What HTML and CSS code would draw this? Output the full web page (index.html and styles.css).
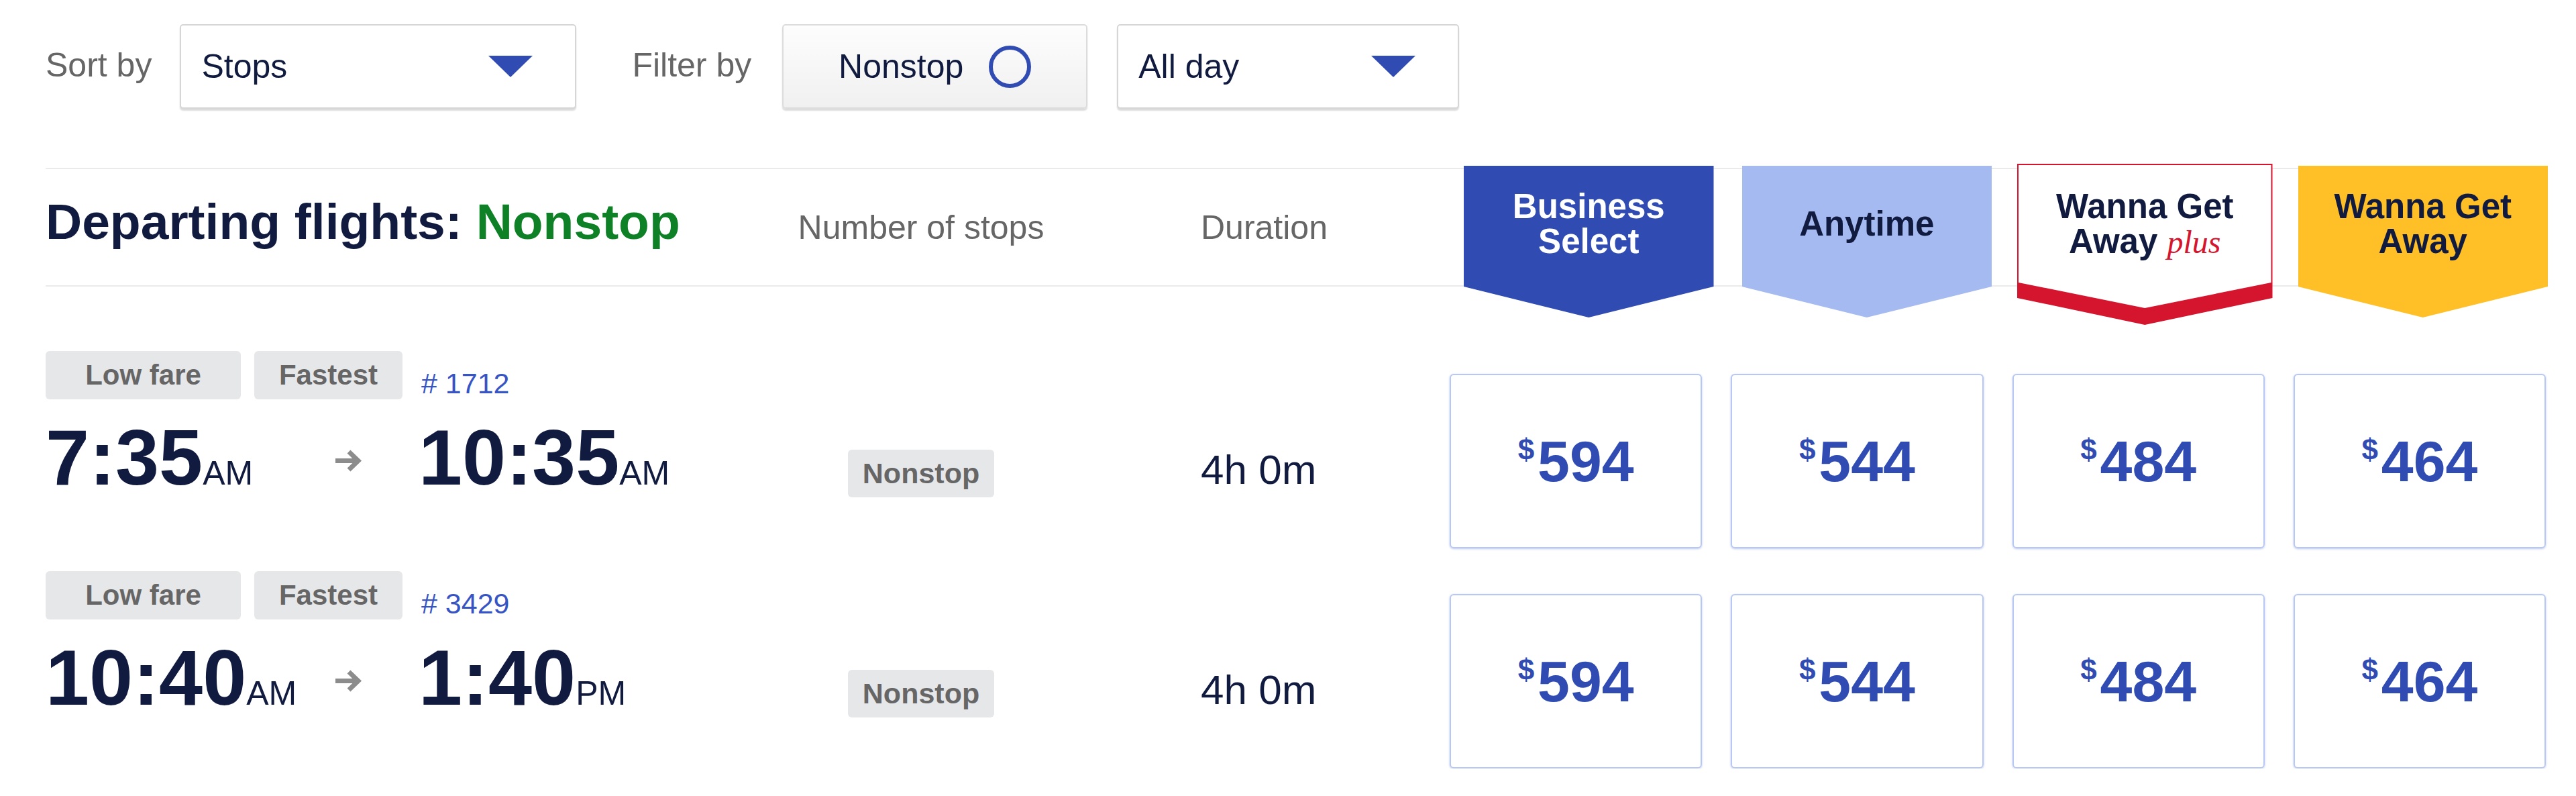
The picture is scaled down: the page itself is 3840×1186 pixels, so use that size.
FILE: index.html
```html
<!DOCTYPE html>
<html lang="en">
<head>
  <meta charset="UTF-8">
  <meta name="viewport" content="width=device-width, initial-scale=1.0">
  <title>Select flights</title>
  <link rel="stylesheet" href="styles.css">
</head>
<body>
  <div class="page">
    <!-- Sort and filter controls -->
    <div class="toolbar">
      <span class="tool-label">Sort by</span>
      <div class="select select-sort">
        <span>Stops</span>
        <svg class="caret" viewBox="0 0 66 32"><path d="M0 0h66L33 32z"/></svg>
      </div>
      <span class="tool-label filter-label">Filter by</span>
      <button class="toggle">Nonstop <span class="ring"></span></button>
      <div class="select select-time">
        <span>All day</span>
        <svg class="caret" viewBox="0 0 66 32"><path d="M0 0h66L33 32z"/></svg>
      </div>
    </div>

    <!-- Column headers -->
    <div class="results-head">
      <h2 class="title">Departing flights: <span class="accent">Nonstop</span></h2>
      <div class="col-label stops-label">Number of stops</div>
      <div class="col-label duration-label">Duration</div>
      <div class="fare-heads">
        <div class="fare-head business"><div class="fare-name"><span>Business<br>Select</span></div></div>
        <div class="fare-head anytime"><div class="fare-name"><span>Anytime</span></div></div>
        <div class="fare-head plus">
          <div class="plus-inner"><div class="fare-name"><span>Wanna Get<br>Away <em>plus</em></span></div></div>
        </div>
        <div class="fare-head getaway"><div class="fare-name"><span>Wanna Get<br>Away</span></div></div>
      </div>
    </div>

    <!-- Flight rows -->
    <div class="flight">
      <div class="flight-main">
        <div class="tags">
          <span class="tag tag-wide">Low fare</span>
          <span class="tag">Fastest</span>
          <span class="flight-no"># 1712</span>
        </div>
        <div class="times">
          <div class="time depart">7:35<small>AM</small></div>
          <svg class="arrow" viewBox="0 0 45 43"><path d="M3 21.5h34M23 8l14 13.5L23 35" /></svg>
          <div class="time">10:35<small>AM</small></div>
        </div>
      </div>
      <div class="stops"><span class="stop-tag">Nonstop</span></div>
      <div class="duration">4h 0m</div>
      <div class="fares">
        <div class="fare-box"><div class="price"><span class="cur">$</span><span class="amt">594</span></div></div>
        <div class="fare-box"><div class="price"><span class="cur">$</span><span class="amt">544</span></div></div>
        <div class="fare-box"><div class="price"><span class="cur">$</span><span class="amt">484</span></div></div>
        <div class="fare-box"><div class="price"><span class="cur">$</span><span class="amt">464</span></div></div>
      </div>
    </div>

    <div class="flight">
      <div class="flight-main">
        <div class="tags">
          <span class="tag tag-wide">Low fare</span>
          <span class="tag">Fastest</span>
          <span class="flight-no"># 3429</span>
        </div>
        <div class="times">
          <div class="time depart">10:40<small>AM</small></div>
          <svg class="arrow" viewBox="0 0 45 43"><path d="M3 21.5h34M23 8l14 13.5L23 35" /></svg>
          <div class="time">1:40<small>PM</small></div>
        </div>
      </div>
      <div class="stops"><span class="stop-tag">Nonstop</span></div>
      <div class="duration">4h 0m</div>
      <div class="fares">
        <div class="fare-box"><div class="price"><span class="cur">$</span><span class="amt">594</span></div></div>
        <div class="fare-box"><div class="price"><span class="cur">$</span><span class="amt">544</span></div></div>
        <div class="fare-box"><div class="price"><span class="cur">$</span><span class="amt">484</span></div></div>
        <div class="fare-box"><div class="price"><span class="cur">$</span><span class="amt">464</span></div></div>
      </div>
    </div>
  </div>
</body>
</html>
```

FILE: styles.css
```css
* {
  margin: 0;
  padding: 0;
  box-sizing: border-box;
}

body {
  font-family: "Liberation Sans", Arial, sans-serif;
  background: #fff;
  color: #111b40;
}

.page {
  padding: 36px 45px 0 68px;
}

/* Toolbar */

.toolbar {
  display: flex;
  align-items: center;
  height: 126px;
  margin-bottom: 88px;
}

.tool-label {
  font-size: 50px;
  color: #666;
  margin-right: 42px;
  margin-bottom: 4px;
}

.filter-label {
  margin-left: 83px;
  margin-right: 46px;
}

.select {
  display: flex;
  align-items: center;
  justify-content: space-between;
  height: 126px;
  padding: 0 63px 0 30px;
  font-size: 50px;
  color: #111b40;
  background: #fff;
  border: 2px solid #d6d6d6;
  border-radius: 5px;
  box-shadow: 0 3px 2px rgba(0, 0, 0, 0.14);
}

.select-sort {
  width: 591px;
}

.select-time {
  width: 510px;
}

.caret {
  width: 66px;
  height: 32px;
  fill: #304cb2;
}

.toggle {
  display: flex;
  align-items: center;
  justify-content: center;
  gap: 38px;
  width: 455px;
  height: 126px;
  margin-right: 44px;
  font-family: inherit;
  font-size: 50px;
  color: #111b40;
  background: linear-gradient(#fdfdfd, #f0f0f0);
  border: 2px solid #dcdcdc;
  border-radius: 5px;
  box-shadow: 0 3px 2px rgba(0, 0, 0, 0.14);
}

.ring {
  width: 63px;
  height: 63px;
  border: 6px solid #304cb2;
  border-radius: 50%;
}

/* Header row */

.results-head,
.flight {
  display: grid;
  grid-template-columns: 1118px 374px 1fr 1634px;
}

.results-head {
  height: 177px;
  padding-top: 40px;
  border-top: 2px solid #ebebeb;
  border-bottom: 2px solid #ebebeb;
  align-items: baseline;
}

.title {
  font-size: 75px;
  line-height: 76px;
  font-weight: bold;
  color: #111b40;
  white-space: nowrap;
}

.accent {
  color: #0e8127;
}

.col-label {
  font-size: 50px;
  line-height: 51px;
  color: #666;
  white-space: nowrap;
}

.stops-label {
  text-align: center;
}

.duration-label {
  padding-left: 230px;
}

.fare-heads {
  align-self: start;
  display: grid;
  grid-template-columns: repeat(4, 1fr);
  gap: 42px;
  margin-top: -45px;
  margin-right: -3px;
  padding-left: 21px;
}

.fare-head {
  height: 226px;
  clip-path: polygon(0 0, 100% 0, 100% 180px, 50% 100%, 0 180px);
}

.fare-name {
  display: flex;
  align-items: center;
  justify-content: center;
  height: 180px;
  padding-bottom: 6px;
  text-align: center;
  font-size: 51px;
  line-height: 52px;
  font-weight: bold;
  color: #111b40;
}

.business {
  background: #304cb2;
}

.business .fare-name {
  color: #fff;
}

.anytime {
  background: #a4baf0;
}

.getaway {
  background: #ffbf27;
}

.plus {
  height: 240px;
  margin: -3px -4px 0;
  background: #d5152e;
  clip-path: polygon(0 0, 100% 0, 100% 200px, 50% 100%, 0 200px);
}

.plus-inner {
  height: 213px;
  margin: 2px 2px 0;
  background: #fff;
  clip-path: polygon(0 0, 100% 0, 100% 175px, 50% 100%, 0 175px);
}

.plus .fare-name {
  height: 175px;
  padding-bottom: 0;
}

.plus em {
  font-family: "Liberation Serif", "Times New Roman", serif;
  font-size: 48px;
  line-height: 1;
  font-weight: normal;
  color: #d5152e;
}

/* Flight rows */

.flight {
  align-items: start;
  height: 294px;
  margin-top: 34px;
}

.results-head + .flight {
  margin-top: 96px;
}

.tags {
  display: flex;
  align-items: flex-end;
  gap: 20px;
}

.tag {
  height: 72px;
  min-width: 221px;
  padding: 0 36px;
  line-height: 72px;
  text-align: center;
  font-size: 42px;
  font-weight: bold;
  color: #666;
  background: #e6e7e9;
  border-radius: 6px;
}

.tag-wide {
  min-width: 291px;
}

.flight-no {
  margin-left: 8px;
  margin-bottom: 2px;
  font-size: 43px;
  line-height: 43px;
  color: #3654c4;
}

.times {
  display: flex;
  align-items: flex-start;
  margin-top: 28px;
}

.time {
  font-size: 117px;
  line-height: 117px;
  font-weight: bold;
  color: #111b40;
  white-space: nowrap;
}

.time small {
  font-size: 50px;
  line-height: 1;
  font-weight: normal;
}

.depart {
  width: 429px;
}

.arrow {
  width: 45px;
  height: 43px;
  margin-top: 42px;
  margin-right: 82px;
  fill: none;
  stroke: #8c8c8c;
  stroke-width: 7;
}

.stops {
  text-align: center;
  padding-top: 147px;
}

.stop-tag {
  display: inline-block;
  height: 71px;
  padding: 0 22px;
  line-height: 71px;
  font-size: 43px;
  font-weight: bold;
  color: #666;
  background: #e6e7e9;
  border-radius: 6px;
}

.duration {
  padding: 146px 0 0 230px;
  font-size: 62px;
  line-height: 62px;
  color: #111b40;
}

.fares {
  display: grid;
  grid-template-columns: repeat(4, 1fr);
  gap: 43px;
  margin-top: 34px;
}

.fare-box {
  display: flex;
  align-items: center;
  justify-content: center;
  height: 260px;
  border: 2px solid #b8c8f4;
  border-radius: 6px;
  box-shadow: 0 1px 3px rgba(48, 76, 178, 0.3);
}

.price {
  display: flex;
  align-items: flex-start;
  color: #304cb2;
  font-weight: bold;
}

.cur {
  font-size: 44px;
  line-height: 44px;
  margin-top: 4px;
  margin-right: 5px;
}

.amt {
  font-size: 86px;
  line-height: 86px;
}
```
